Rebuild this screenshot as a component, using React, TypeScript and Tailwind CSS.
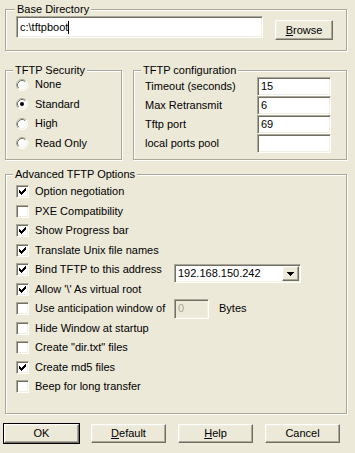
import React from "react";

const sunken =
  "border border-t-[#ACA899] border-l-[#ACA899] border-b-white border-r-white shadow-[inset_1px_1px_0_#716F64,inset_-1px_-1px_0_#F1EFE2]";
const raised =
  "bg-[#ECE9D8] border border-t-white border-l-white border-b-[#716F64] border-r-[#716F64] shadow-[inset_-1px_-1px_0_#ACA899,inset_1px_1px_0_#F1EFE2]";

function Frame({
  title,
  titleLeft,
  className,
  children,
}: {
  title: string;
  titleLeft: string;
  className: string;
  children?: React.ReactNode;
}) {
  return (
    <div
      className={`relative border border-[#ACA899] shadow-[inset_1px_1px_0_#fff,1px_1px_0_#fff] ${className}`}
    >
      <span
        className={`absolute top-[-7px] px-[2px] bg-[#ECE9D8] leading-[13px] whitespace-nowrap ${titleLeft}`}
      >
        {title}
      </span>
      {children}
    </div>
  );
}

function Radio({ checked }: { checked?: boolean }) {
  return (
    <svg width="12" height="12" viewBox="0 0 12 12" className="shrink-0">
      <circle cx="6" cy="6" r="5.5" fill="#fff" />
      <path d="M2.11 9.89 A5.5 5.5 0 0 1 9.89 2.11" stroke="#ACA899" fill="none" />
      <path d="M2.82 9.18 A4.5 4.5 0 0 1 9.18 2.82" stroke="#716F64" fill="none" />
      <path d="M9.89 2.11 A5.5 5.5 0 0 1 2.11 9.89" stroke="#ffffff" fill="none" />
      <path d="M9.18 2.82 A4.5 4.5 0 0 1 2.82 9.18" stroke="#F1EFE2" fill="none" />
      {checked && <circle cx="6" cy="6" r="2" fill="#000" />}
    </svg>
  );
}

function Check({ checked }: { checked?: boolean }) {
  return (
    <div className={`w-[13px] h-[13px] shrink-0 bg-white ${sunken} flex items-center justify-center`}>
      {checked && (
        <svg width="7" height="7" viewBox="0 0 7 7" shapeRendering="crispEdges">
          <polygon points="0,2 2,4 7,-1 7,2 2,7 0,5" fill="#000" />
        </svg>
      )}
    </div>
  );
}

function Btn({
  children,
  className = "",
}: {
  children: React.ReactNode;
  className?: string;
}) {
  return (
    <div
      className={`${raised} flex items-center justify-center leading-[13px] ${className}`}
    >
      {children}
    </div>
  );
}

const options: { label: string; checked: boolean }[] = [
  { label: "Option negotiation", checked: true },
  { label: "PXE Compatibility", checked: false },
  { label: "Show Progress bar", checked: true },
  { label: "Translate Unix file names", checked: true },
  { label: "Bind TFTP to this address", checked: true },
  { label: "Allow '\\' As virtual root", checked: true },
  { label: "Use anticipation window of", checked: false },
  { label: "Hide Window at startup", checked: false },
  { label: 'Create "dir.txt" files', checked: false },
  { label: "Create md5 files", checked: true },
  { label: "Beep for long transfer", checked: false },
];

export default function App() {
  return (
    <div className="w-[355px] h-[453px] overflow-hidden bg-[#ECE9D8] text-black text-[11px] leading-[13px] font-['Liberation_Sans',Arial,sans-serif] pt-[9px]">
      {/* Base Directory */}
      <Frame
        title="Base Directory"
        titleLeft="left-[9px]"
        className="ml-[5px] w-[342px] h-[42px] flex items-start pl-[10px] pt-[6px]"
      >
        <div className={`w-[247px] h-[22px] bg-white ${sunken} flex items-center pl-[3px]`}>
          <span>c:\tftpboot</span>
          <span className="w-px h-[13px] bg-black" />
        </div>
        <Btn className="ml-[12px] mt-[4px] w-[58px] h-[20px]">
          <span>
            <span className="underline">B</span>rowse
          </span>
        </Btn>
      </Frame>

      {/* Security + configuration */}
      <div className="ml-[5px] mt-[19px] flex gap-[11px]">
        <Frame
          title="TFTP Security"
          titleLeft="left-[7px]"
          className="w-[117px] h-[90px] pt-[4px] pl-[10px]"
        >
          {[
            { l: "None", c: false },
            { l: "Standard", c: true },
            { l: "High", c: false },
            { l: "Read Only", c: false },
          ].map((r) => (
            <div key={r.l} className="h-[19.5px] flex items-center gap-[7px]">
              <Radio checked={r.c} />
              <span>{r.l}</span>
            </div>
          ))}
        </Frame>
        <Frame
          title="TFTP configuration"
          titleLeft="left-[7px]"
          className="w-[214px] h-[90px] pt-[6px] pl-[11px] pr-[15px]"
        >
          {[
            { l: "Timeout (seconds)", v: "15" },
            { l: "Max Retransmit", v: "6" },
            { l: "Tftp port", v: "69" },
            { l: "local ports pool", v: "" },
          ].map((r) => (
            <div key={r.l} className="h-[19px] flex items-center justify-between">
              <span>{r.l}</span>
              <div className={`w-[74px] h-[19px] bg-white ${sunken} flex items-center pl-[3px]`}>
                {r.v}
              </div>
            </div>
          ))}
        </Frame>
      </div>

      {/* Advanced */}
      <Frame
        title="Advanced TFTP Options"
        titleLeft="left-[7px]"
        className="ml-[5px] mt-[14px] w-[342px] h-[240px] pt-[7px] pl-[10px]"
      >
        {options.map((o, i) => (
          <div key={o.label} className="h-[19.5px] flex items-center">
            <Check checked={o.checked} />
            {i === 4 ? (
              <>
                <span className="ml-[6px] w-[139px] whitespace-nowrap">{o.label}</span>
                <div className={`mt-[8px] w-[127px] h-[19px] bg-white ${sunken} flex items-center justify-between pl-[3px] pr-[1px]`}>
                  <span>192.168.150.242</span>
                  <div className={`${raised} w-[17px] h-[15px] flex items-center justify-center`}>
                    <svg width="7" height="4" viewBox="0 0 7 4" shapeRendering="crispEdges">
                      <polygon points="0,0 7,0 3.5,4" fill="#000" />
                    </svg>
                  </div>
                </div>
              </>
            ) : i === 6 ? (
              <>
                <span className="ml-[6px] w-[139px] whitespace-nowrap">{o.label}</span>
                <div className={`w-[35px] h-[20px] bg-[#ECE9D8] ${sunken} flex items-center pl-[3px] text-[#ACA899]`}>
                  0
                </div>
                <span className="ml-[10px]">Bytes</span>
              </>
            ) : (
              <span className="ml-[6px] whitespace-nowrap">{o.label}</span>
            )}
          </div>
        ))}
      </Frame>

      {/* Buttons */}
      <div className="mt-[10px] pl-[4px] flex gap-[12px]">
        <Btn className="w-[75px] h-[19px] outline outline-1 outline-black">OK</Btn>
        <Btn className="w-[75px] h-[19px]">
          <span>
            <span className="underline">D</span>efault
          </span>
        </Btn>
        <Btn className="w-[75px] h-[19px]">
          <span>
            <span className="underline">H</span>elp
          </span>
        </Btn>
        <Btn className="w-[75px] h-[19px]">Cancel</Btn>
      </div>
    </div>
  );
}
